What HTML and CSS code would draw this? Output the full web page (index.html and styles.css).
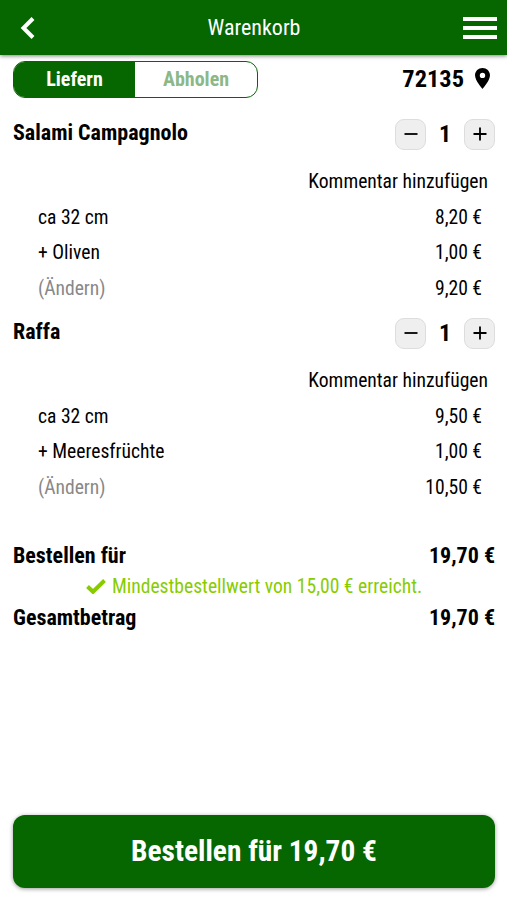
FILE: index.html
```html
<!DOCTYPE html>
<html lang="de">
<head>
    <meta charset="utf-8">
    <title>Warenkorb</title>
    <link rel="stylesheet" href="styles.css">
</head>
<body>
<div class="header">
    <svg class="back" width="16" height="24" viewBox="0 0 16 24"><path d="M14 2.5 L4.5 12 L14 21.5"/></svg>
    <div class="header-title">Warenkorb</div>
    <div class="menu"><span></span><span></span><span></span></div>
</div>
<div class="container">
    <div class="delivery">
        <div class="toggle">
            <div class="toggle-option active">Liefern</div>
            <div class="toggle-option">Abholen</div>
        </div>
        <div class="location">
            <span>72135</span>
            <svg width="15" height="21" viewBox="0 0 15 21"><path fill-rule="evenodd" d="M7.5 0C3.3 0 0 3.2 0 7.3C0 12.6 7.5 21 7.5 21S15 12.6 15 7.3C15 3.2 11.7 0 7.5 0ZM7.5 4.7A2.7 2.7 0 1 1 7.5 10.1A2.7 2.7 0 0 1 7.5 4.7Z"/></svg>
        </div>
    </div>

    <div class="item">
        <div class="item-header">
            <div class="item-title">Salami Campagnolo</div>
            <div class="quantity">
                <button><svg width="14" height="14" viewBox="0 0 14 14"><path d="M0.5 7H13.5"/></svg></button>
                <span>1</span>
                <button><svg width="14" height="14" viewBox="0 0 14 14"><path d="M0.5 7H13.5M7 0.5V13.5"/></svg></button>
            </div>
        </div>
        <div class="comment">Kommentar hinzufügen</div>
        <div class="row"><span>ca 32 cm</span><span>8,20 €</span></div>
        <div class="row"><span>+ Oliven</span><span>1,00 €</span></div>
        <div class="row"><span class="change">(Ändern)</span><span>9,20 €</span></div>
    </div>

    <div class="item">
        <div class="item-header">
            <div class="item-title">Raffa</div>
            <div class="quantity">
                <button><svg width="14" height="14" viewBox="0 0 14 14"><path d="M0.5 7H13.5"/></svg></button>
                <span>1</span>
                <button><svg width="14" height="14" viewBox="0 0 14 14"><path d="M0.5 7H13.5M7 0.5V13.5"/></svg></button>
            </div>
        </div>
        <div class="comment">Kommentar hinzufügen</div>
        <div class="row"><span>ca 32 cm</span><span>9,50 €</span></div>
        <div class="row"><span>+ Meeresfrüchte</span><span>1,00 €</span></div>
        <div class="row"><span class="change">(Ändern)</span><span>10,50 €</span></div>
    </div>

    <div class="summary">
        <div class="total"><span>Bestellen für</span><span>19,70 €</span></div>
        <div class="minimum">
            <svg width="20" height="15" viewBox="0 0 20 15"><path d="M1.5 7.5L7 12.8L18.5 1.5"/></svg>
            <span>Mindestbestellwert von 15,00 € erreicht.</span>
        </div>
        <div class="total"><span>Gesamtbetrag</span><span>19,70 €</span></div>
    </div>

    <button class="order-button"><span>Bestellen für 19,70 €</span></button>
</div>
</body>
</html>
```

FILE: styles.css
```css
* {
    box-sizing: border-box;
}

body {
    margin: 0;
    height: 900px;
    display: flex;
    flex-direction: column;
    font-family: "Roboto Condensed", Roboto, sans-serif;
    font-stretch: 75%;
    font-size: 19.6px;
    color: #000;
    background-color: #fff;
}

.header {
    height: 55px;
    padding: 0 10px 0 19px;
    display: grid;
    grid-template-columns: 26px 1fr 34px;
    align-items: center;
    background-color: #066600;
    color: #fff;
    box-shadow: 0 1px 4px rgba(0, 0, 0, 0.5);
}

.back path {
    fill: none;
    stroke: #fff;
    stroke-width: 4;
}

.header-title {
    font-size: 22px;
    text-align: center;
}

.menu {
    display: flex;
    flex-direction: column;
    gap: 5px;
}

.menu span {
    height: 4px;
    background-color: #fff;
}

.container {
    flex: 1;
    display: flex;
    flex-direction: column;
    padding: 6px 12px 12px 13px;
}

.delivery {
    height: 36px;
    margin-bottom: 18px;
    display: flex;
    justify-content: space-between;
    align-items: center;
}

.toggle {
    width: 245px;
    height: 37px;
    display: flex;
    border: 1px solid #066600;
    border-radius: 12px;
    overflow: hidden;
}

.toggle-option {
    width: 122px;
    line-height: 35px;
    text-align: center;
    font-size: 20px;
    font-weight: bold;
    color: #8cb888;
}

.toggle-option.active {
    width: 121px;
    background-color: #066600;
    color: #fff;
}

.location {
    display: flex;
    align-items: center;
    gap: 11px;
    padding-right: 5px;
    font-size: 24.4px;
    font-weight: bold;
}

.location span {
    padding-bottom: 2px;
}

.location svg {
    margin-bottom: 2px;
}

.item {
    height: 199px;
}

.item-header {
    height: 38px;
    margin-bottom: 10px;
    display: flex;
    justify-content: space-between;
    align-items: center;
}

.item-title {
    padding-bottom: 4px;
    font-size: 22px;
    font-weight: bold;
}

.quantity {
    display: flex;
    align-items: center;
    font-size: 24px;
    font-weight: bold;
}

.quantity span {
    width: 38px;
    text-align: center;
}

.quantity button {
    width: 31px;
    height: 31px;
    padding: 0;
    display: flex;
    align-items: center;
    justify-content: center;
    background-color: #efefef;
    border: 1px solid #ddd;
    border-radius: 9px;
}

.quantity path {
    stroke: #000;
    stroke-width: 1.8;
}

.comment {
    height: 37px;
    padding-right: 7px;
    line-height: 38px;
    text-align: right;
}

.row {
    height: 35.4px;
    padding: 0 13px 0 25px;
    display: flex;
    justify-content: space-between;
    line-height: 36.4px;
}

.change {
    color: #888;
}

.summary {
    margin-top: 27px;
}

.total {
    height: 31px;
    display: flex;
    justify-content: space-between;
    line-height: 31px;
    font-size: 22px;
    font-weight: bold;
}

.minimum {
    height: 31px;
    display: flex;
    justify-content: center;
    align-items: center;
    gap: 6px;
    color: #8c0;
}

.minimum path {
    fill: none;
    stroke: #8c0;
    stroke-width: 4;
}

.order-button {
    height: 73px;
    margin-top: auto;
    padding: 0 0 2px;
    background-color: #066600;
    border: none;
    border-radius: 12px;
    color: #fff;
    font-family: inherit;
    font-stretch: inherit;
    font-size: 29.4px;
    font-weight: bold;
    box-shadow: 0 1px 4px rgba(0, 0, 0, 0.4);
}
```
